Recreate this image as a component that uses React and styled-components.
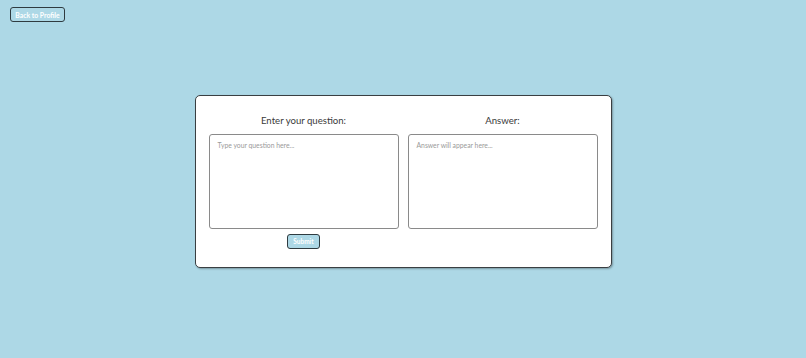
import React from "react";
import styled, { createGlobalStyle } from "styled-components";

const Global = createGlobalStyle`
  html, body { margin: 0; padding: 0; }
  body {
    background: #add8e6;
    font-family: "Lato", "Open Sans", sans-serif;
    width: 806px;
    height: 358px;
    overflow: hidden;
  }
`;

const Page = styled.div`
  position: relative;
  width: 806px;
  height: 358px;
  display: flex;
  align-items: center;
  justify-content: center;
  padding-top: 4px;
  box-sizing: border-box;
`;

const BackButton = styled.button`
  position: absolute;
  top: 7px;
  left: 10px;
  width: 55px;
  height: 15px;
  padding: 0;
  background: #add8e6;
  color: #ffffff;
  font-family: "Lato", sans-serif;
  font-weight: 700;
  font-size: 6.8px;
  border: 1.5px solid #2f3b40;
  border-radius: 3px;
  cursor: pointer;
`;

const Card = styled.div`
  width: 417px;
  height: 173px;
  box-sizing: border-box;
  background: #fff;
  border: 1.5px solid #3a3f42;
  border-radius: 5px;
  box-shadow: 1px 1px 2px rgba(0, 0, 0, 0.3);
  padding: 18px 13px 0 13px;
  display: flex;
  justify-content: flex-start;
  gap: 9px;
`;

const Column = styled.div`
  width: 190px;
  display: flex;
  flex-direction: column;
  align-items: center;
`;

const Heading = styled.h2`
  margin: 0 0 6px 0;
  font-size: 9.6px;
  font-weight: 400;
  color: #3a3a3a;
  line-height: 14px;
`;

const Area = styled.textarea`
  width: 190px;
  height: 95px;
  box-sizing: border-box;
  border: 1px solid #8a8a8a;
  border-radius: 3px;
  padding: 6px 8px;
  resize: none;
  font-family: "Lato", sans-serif;
  font-size: 6.8px;
  color: #333;
  &::placeholder { color: #9a9a9a; }
`;

const SubmitButton = styled.button`
  margin-top: 5px;
  width: 33px;
  height: 15px;
  padding: 0;
  background: #add8e6;
  color: #fff;
  font-family: "Lato", sans-serif;
  font-weight: 700;
  font-size: 6.5px;
  border: 1.5px solid #2f3b40;
  border-radius: 3px;
`;

export default function App() {
  return (
    <Page>
      <Global />
      <BackButton>Back to Profile</BackButton>
      <Card>
        <Column>
          <Heading>Enter your question:</Heading>
          <Area placeholder="Type your question here..." />
          <SubmitButton>Submit</SubmitButton>
        </Column>
        <Column>
          <Heading>Answer:</Heading>
          <Area placeholder="Answer will appear here..." readOnly />
        </Column>
      </Card>
    </Page>
  );
}
